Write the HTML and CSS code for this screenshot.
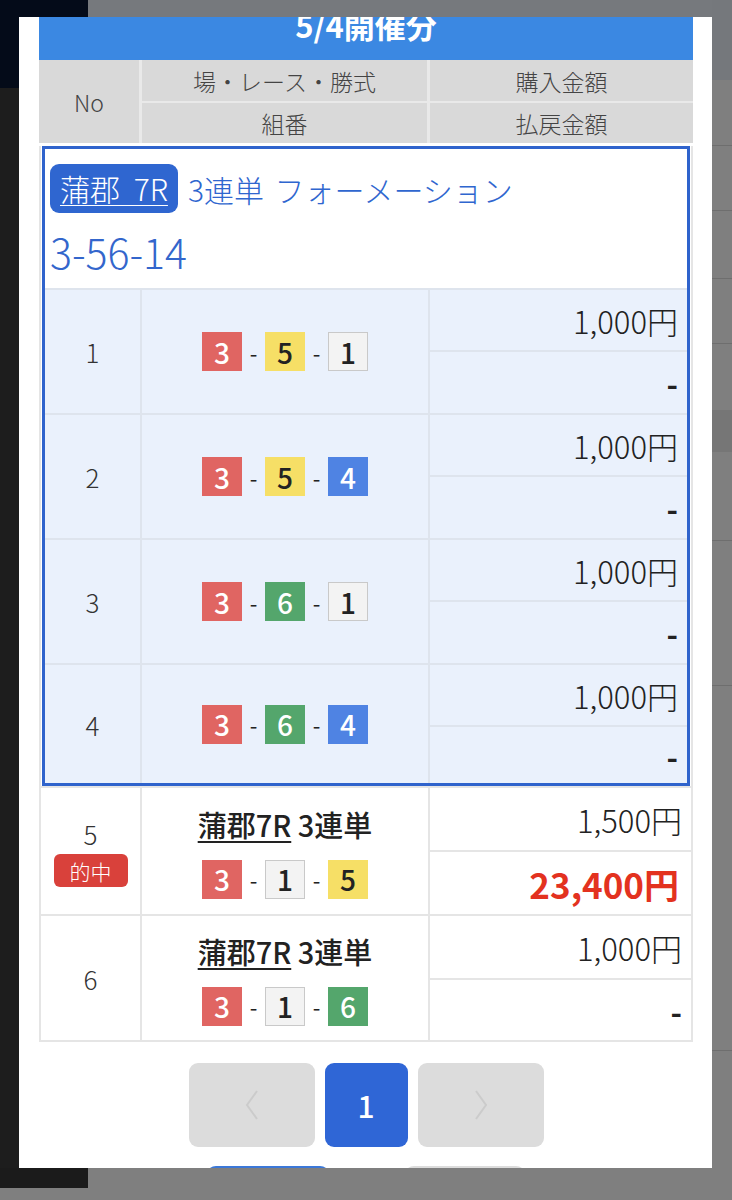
FILE: index.html
```html
<!DOCTYPE html>
<html lang="ja">
<head>
<meta charset="utf-8">
<title>5/4開催分</title>
<link rel="stylesheet" href="styles.css">
</head>
<body>
<div class="backdrop">
  <div class="bd-navy"></div>
  <div class="bd-top"></div>
  <div class="bd-right-top"></div>
  <div class="bd-line l1"></div>
  <div class="bd-line l2"></div>
  <div class="bd-line l3"></div>
  <div class="bd-line l4"></div>
  <div class="bd-band"></div>
  <div class="bd-line l5"></div>
  <div class="bd-line l6"></div>
  <div class="bd-line l7"></div>
  <div class="bd-left"></div>
  <div class="bd-bottom-left"></div>
</div>

<div class="modal">
  <div class="title"><span>5/4開催分</span></div>

  <div class="thead">
    <div class="th th-no">No</div>
    <div class="th">場・レース・勝式</div>
    <div class="th">購入金額</div>
    <div class="th">組番</div>
    <div class="th">払戻金額</div>
  </div>

  <div class="tbody">
    <div class="formation">
      <div class="f-head">
        <div class="f-line"><span class="venue">蒲郡 7R</span><span class="f-type">3連単 フォーメーション</span></div>
        <div class="f-combo">3-56-14</div>
      </div>

      <div class="frow">
        <div class="cell no">1</div>
        <div class="cell combo"><span class="boat red">3</span><span class="dash">-</span><span class="boat yellow">5</span><span class="dash">-</span><span class="boat white">1</span></div>
        <div class="amounts"><div class="amt">1,000円</div><div class="amt pay">-</div></div>
      </div>
      <div class="frow">
        <div class="cell no">2</div>
        <div class="cell combo"><span class="boat red">3</span><span class="dash">-</span><span class="boat yellow">5</span><span class="dash">-</span><span class="boat blue">4</span></div>
        <div class="amounts"><div class="amt">1,000円</div><div class="amt pay">-</div></div>
      </div>
      <div class="frow">
        <div class="cell no">3</div>
        <div class="cell combo"><span class="boat red">3</span><span class="dash">-</span><span class="boat green">6</span><span class="dash">-</span><span class="boat white">1</span></div>
        <div class="amounts"><div class="amt">1,000円</div><div class="amt pay">-</div></div>
      </div>
      <div class="frow last">
        <div class="cell no">4</div>
        <div class="cell combo"><span class="boat red">3</span><span class="dash">-</span><span class="boat green">6</span><span class="dash">-</span><span class="boat blue">4</span></div>
        <div class="amounts"><div class="amt">1,000円</div><div class="amt pay">-</div></div>
      </div>
    </div>

    <div class="nrow r5">
      <div class="cell no stack"><span>5</span><span class="hit">的中</span></div>
      <div class="cell race">
        <div class="race-name"><span class="u">蒲郡7R</span> 3連単</div>
        <div class="combo-line"><span class="boat red">3</span><span class="dash">-</span><span class="boat white">1</span><span class="dash">-</span><span class="boat yellow">5</span></div>
      </div>
      <div class="amounts plain"><div class="amt">1,500円</div><div class="amt win">23,400円</div></div>
    </div>
    <div class="nrow r6">
      <div class="cell no">6</div>
      <div class="cell race">
        <div class="race-name"><span class="u">蒲郡7R</span> 3連単</div>
        <div class="combo-line"><span class="boat red">3</span><span class="dash">-</span><span class="boat white">1</span><span class="dash">-</span><span class="boat green">6</span></div>
      </div>
      <div class="amounts plain"><div class="amt">1,000円</div><div class="amt pay">-</div></div>
    </div>
  </div>

  <div class="pager">
    <div class="pg pg-arrow"><svg width="14" height="32" viewBox="0 0 14 32"><polyline points="12,2 2,16 12,30" fill="none" stroke="#cbcbcb" stroke-width="2"/></svg></div>
    <div class="pg pg-cur">1</div>
    <div class="pg pg-arrow"><svg width="14" height="32" viewBox="0 0 14 32"><polyline points="2,2 12,16 2,30" fill="none" stroke="#cbcbcb" stroke-width="2"/></svg></div>
  </div>

  <div class="actions">
    <div class="act act-outline"></div>
    <div class="act act-gray"></div>
  </div>
</div>
</body>
</html>
```

FILE: styles.css
```css
* { box-sizing: border-box; }

html, body {
  margin: 0;
  padding: 0;
}

body {
  width: 732px;
  height: 1200px;
  position: relative;
  overflow: hidden;
  background: #7f7f7f;
  font-family: "Noto Sans CJK JP", "Noto Sans", sans-serif;
  color: #222;
}

/* ---- backdrop (page behind the modal) ---- */
.backdrop { position: absolute; inset: 0; }
.backdrop > div { position: absolute; }
.bd-navy { left: 0; top: 0; width: 88px; height: 88px; background: #040b19; }
.bd-top { left: 88px; top: 0; width: 644px; height: 17px; background: #76797d; }
.bd-right-top { left: 712px; top: 0; width: 20px; height: 80px; background: #75787c; }
.bd-line { left: 712px; width: 20px; height: 1px; background: #6e6e6e; }
.l1 { top: 145px; }
.l2 { top: 210px; }
.l3 { top: 278px; }
.l4 { top: 343px; }
.bd-band { left: 712px; top: 410px; width: 20px; height: 42px; background: #767676; }
.l5 { top: 540px; }
.l6 { top: 685px; }
.l7 { top: 1050px; }
.bd-left { left: 0; top: 88px; width: 19px; height: 1080px; background: #1d1d1d; }
.bd-bottom-left { left: 0; top: 1168px; width: 88px; height: 20px; background: #1b1b1b; }

/* ---- modal ---- */
.modal {
  position: absolute;
  left: 19px;
  top: 17px;
  width: 693px;
  height: 1151px;
  background: #fff;
  overflow: hidden;
  padding: 0 19px 0 20px;
}

.title {
  height: 43px;
  background: #3b88e2;
  color: #fff;
  text-align: center;
  font-size: 31px;
  font-weight: bold;
  line-height: 32px;
  overflow: hidden;
}
.title span { display: block; margin-top: -8px; }

/* ---- table header ---- */
.thead {
  display: grid;
  grid-template-columns: 100px 285px 1fr;
  grid-template-rows: 41px 40px;
  column-gap: 3px;
  row-gap: 2px;
  background: #e9e9e9;
}
.th {
  background: #d9d9d9;
  color: #444;
  font-size: 23px;
  font-weight: 300;
  display: flex;
  align-items: center;
  justify-content: center;
}
.th-no { grid-row: 1 / 3; }

/* ---- table body ---- */
.tbody {
  border: 2px solid #e5e5e5;
  border-top: none;
}

.formation {
  margin: 3px 1px 0;
  border: 3px solid #2f63cc;
}

.f-head {
  height: 139px;
  background: #fff;
  padding: 15px 0 0 5px;
}
.f-line { display: flex; align-items: center; }
.venue {
  height: 49px;
  line-height: 49px;
  padding: 0 10px;
  background: #2f66d0;
  border-radius: 9px;
  color: #fff;
  font-size: 30px;
  font-weight: 300;
  word-spacing: 7px;
  text-decoration: underline;
  text-decoration-thickness: 1px;
  text-underline-offset: 4px;
}
.f-type {
  margin-left: 10px;
  color: #2f66cf;
  font-size: 30px;
  font-weight: 300;
  word-spacing: 4px;
}
.f-combo {
  margin-top: 14px;
  color: #3366cc;
  font-size: 41px;
  font-weight: 300;
  line-height: 48px;
}

.frow {
  display: grid;
  grid-template-columns: 95px 286px 1fr;
  column-gap: 2px;
  background: #dee4ed;
  padding-top: 2px;
  height: 125px;
}
.frow.last { height: 120px; }
.frow .cell, .frow .amt { background: #eaf1fc; }

.cell {
  display: flex;
  align-items: center;
  justify-content: center;
}
.no { font-size: 26px; font-weight: 300; color: #333; }

.combo, .combo-line {
  display: flex;
  align-items: center;
  justify-content: center;
}

.boat {
  width: 40px;
  height: 39px;
  display: inline-flex;
  align-items: center;
  justify-content: center;
  font-size: 28px;
  font-weight: 500;
  line-height: 1;
}
.red { background: #e06562; color: #fff; }
.yellow { background: #f6df66; color: #222; }
.white { background: #f3f3f3; color: #222; border: 1px solid #c9c9c9; }
.blue { background: #4f83e3; color: #fff; }
.green { background: #54a66c; color: #fff; }
.dash { width: 23px; text-align: center; font-size: 22px; color: #222; }

.amounts {
  display: grid;
  grid-template-rows: 60px 1fr;
  row-gap: 2px;
}
.frow .amounts { background: #dee4ed; }
.amt {
  display: flex;
  align-items: center;
  justify-content: flex-end;
  padding-right: 9px;
  font-size: 31px;
  font-weight: 300;
  color: #222;
}
.amt.pay { font-weight: bold; }
.amt.win { color: #e3321f; font-weight: bold; font-size: 35px; padding-right: 12px; }

/* ---- plain rows ---- */
.nrow {
  display: grid;
  grid-template-columns: 99px 286px 1fr;
  column-gap: 2px;
  background: #e5e5e5;
  padding-top: 2px;
}
.nrow .cell, .nrow .amt { background: #fff; }
.nrow .amounts { background: #e5e5e5; grid-template-rows: 62px 1fr; }
.r5 { height: 128px; }
.r6 { height: 126px; }

.stack { flex-direction: column; gap: 2px; }
.hit {
  width: 74px;
  height: 33px;
  border-radius: 6px;
  background: #d9413b;
  color: #fff;
  font-size: 21px;
  font-weight: 300;
  display: flex;
  align-items: center;
  justify-content: center;
}

.race { flex-direction: column; gap: 16px; }
.race-name { font-size: 29px; font-weight: 500; color: #222; line-height: 40px; }
.race-name .u {
  text-decoration: underline;
  text-decoration-thickness: 2px;
  text-underline-offset: 4px;
}

/* ---- pager ---- */
.pager {
  margin-top: 21px;
  display: flex;
  justify-content: center;
  gap: 10px;
}
.pg {
  height: 84px;
  border-radius: 9px;
  display: flex;
  align-items: center;
  justify-content: center;
}
.pg-arrow { width: 126px; background: #dcdcdc; }
.pg-cur { width: 83px; background: #2f66d6; color: #fff; font-size: 30px; font-weight: 500; }

.actions {
  margin-top: 19px;
  display: flex;
  justify-content: center;
  gap: 74px;
}
.act { height: 40px; border-radius: 10px; }
.act-outline { width: 124px; border: 2px solid #3b78d8; background: #fff; }
.act-gray { width: 122px; background: #dcdcdc; }
```
